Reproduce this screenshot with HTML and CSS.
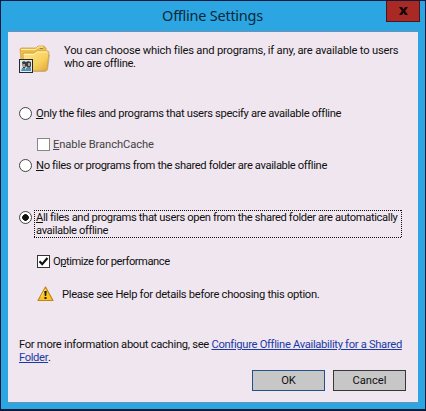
FILE: index.html
```html
<!DOCTYPE html>
<html lang="en">
<head>
<meta charset="utf-8">
<title>Offline Settings</title>
<link rel="stylesheet" href="styles.css">
</head>
<body>
<main class="window">
  <header class="titlebar">
    <h1 class="title">Offline Settings</h1>
    <button class="close" aria-label="Close"><svg width="9" height="8" viewBox="0 0 9 8"><path d="M0 0h3l1.500 2.200L6 0h3L6.200 4 9 8H6L4.500 5.800 3 8H0l2.800-4z" fill="#160808"/></svg></button>
  </header>
  <section class="panel">
    <div class="intro">
      <svg class="folder" width="34" height="32" viewBox="0 0 34 32">
        <defs>
          <linearGradient id="front" x1="0" y1="0" x2="1" y2="1"><stop offset="0" stop-color="#ffe88c"/><stop offset=".6" stop-color="#f7d05e"/><stop offset="1" stop-color="#dca535"/></linearGradient>
        </defs>
        <path d="M6 27l20-1 3-17 2 2-2 15-3 2H7z" fill="#a99a98" opacity=".6"/>
        <path d="M1 5l1-1h15l2-2h6l2 2v4l1 2-2 16H3z" fill="#edbd49" stroke="#d0a04a" stroke-width=".8"/>
        <path d="M2 5.500h15l2-2.500h5" fill="none" stroke="#fff0ac"/>
        <path d="M21 4.500h3" stroke="#8e8751"/>
        <path d="M4 10l1-1h10l3-2h11l1 1-2 18-2 1H5z" fill="url(#front)" stroke="#d3a03d" stroke-width=".8"/>
        <path d="M5 10.500h10l3-2.500h10" fill="none" stroke="#fff4b8"/>
        <rect x=".5" y="15.500" width="13" height="13" fill="#e4eaee" stroke="#252732"/>
        <path d="M3 18l2-1 2 1 2-1 3 1v4l-1 2H9l-2-2-1 2H4z" fill="#3a3f45"/>
        <path d="M4 20h2v3H4zM9 19h2v3H9z" fill="#b89f85"/>
        <path d="M2 27l1-3h3l1 2v1zM7 27v-3l2-1 3 1v3z" fill="#4f93b2"/>
      </svg>
      <p class="text"><span class="l1">You can choose which files and programs, if any, are available to users</span><br><span class="l2">who are offline.</span></p>
    </div>
    <label class="option only"><i class="radio"></i><span class="l3"><u>O</u>nly the files and programs that users specify are available offline</span></label>
    <label class="option branch"><i class="check off"></i><span class="l4"><u>E</u>nable BranchCache</span></label>
    <label class="option none"><i class="radio"></i><span class="l5"><u>N</u>o files or programs from the shared folder are available offline</span></label>
    <label class="option all"><i class="radio on"></i><span class="focus"><span class="l6"><u>A</u>ll files and programs that users open from the shared folder are automatically</span><br><span class="l7">available offline</span>
      <svg class="dots" width="368" height="28"><path d="M0 .5h368M0 27.500h368M.5 0v28M367.500 0v28" fill="none" stroke="#111" stroke-dasharray="1 1"/></svg></span></label>
    <label class="option optimize"><i class="check"><svg width="11" height="11" viewBox="0 0 11 11"><path d="M1.500 5.200l2.700 3L9.500 2" fill="none" stroke="#111" stroke-width="2.200"/></svg></i><span class="l8">O<u>p</u>timize for performance</span></label>
    <div class="option warning">
      <svg width="17" height="16" viewBox="0 0 17 16"><path d="M8.500 1L16 14.500H1z" fill="#fac51c" stroke="#bd8420" stroke-width="1.200" stroke-linejoin="round"/><path d="M8.500 3L4 11" stroke="#ffe478"/><path d="M7.300 5h2.400l-.5 5H7.800zM7.500 11h2v2h-2z" fill="#221b10"/></svg>
      <span class="l9">Please see Help for details before choosing this option.</span>
    </div>
    <p class="text more"><span class="l10">For more information about caching, see </span><a class="l11">Configure Offline Availability for a Shared</a><br><a class="l12">Folder</a>.</p>
    <footer class="actions"><button class="btn ok">OK</button><button class="btn">Cancel</button></footer>
  </section>
</main>
</body>
</html>
```
FILE: styles.css
```css
* { box-sizing: border-box; }
body { margin: 0; }
.window {
  width: 426px; height: 411px; display: flex; flex-direction: column;
  padding: 0 7px 6px; background: #2ba6e3; border: 1px solid #101a3c; border-bottom-width: 2px;
  font: 11.2px/13px Roboto, "Liberation Sans", sans-serif; color: #111;
}
.titlebar { height: 30px; flex: none; display: grid; grid-template-columns: 34px 1fr 34px; margin-right: -2px; }
.title { grid-column: 2; justify-self: center; margin: 4px 3px 0 0; font: 14.5px/20px "Noto Sans", sans-serif; letter-spacing: -.25px; color: #0b2637; white-space: nowrap; }
.close { width: 34px; height: 21px; padding: 0; border: 1px solid #4a1420; border-top: 0; background: #a92925; display: grid; place-items: center; }
.panel { flex: 1; background: #efe6ef; border-top: 1px solid #6d91b0; border-bottom: 1px solid #6d91b0; padding: 0 10px; white-space: nowrap; display: flex; flex-direction: column; }
.text { margin: 0; }
.intro { display: flex; padding-top: 12px; height: 75px; }
.folder { flex: none; margin: 0 11px 0 1px; }
.option { display: flex; align-items: center; height: 13px; flex: none; }
.radio { width: 13px; height: 13px; border: 1px solid #444; border-radius: 50%; background: #fff; margin: 0 4px 0 1px; flex: none; }
.radio.on { background: radial-gradient(circle, #111 0 3px, #fff 3.600px); }
.check { width: 13px; height: 13px; border: 1px solid #333; background: #fff; margin: 0 3px 0 19px; flex: none; display: block; }
.check svg { display: block; }
.check.off { border-color: #888; }
.branch { margin-top: 18px; color: #444; }
.none { margin-top: 8px; }
.all { margin-top: 32px; height: 28px; align-items: flex-start; }
.all .radio { margin-top: 7px; }
.focus { position: relative; display: block; padding-top: 7px; }
.dots { position: absolute; left: -2px; top: 6px; }
.optimize { margin-top: 23px; }
.warning { margin-top: 18px; height: 16px; }
.warning svg { margin: 0 8px 0 19px; }
.more { margin-top: 36px; padding-left: 1px; }
a { color: #1b3aa5; text-decoration: underline; }
.actions { display: flex; justify-content: flex-end; gap: 8px; margin-top: 6px; padding-right: 2px; }
.btn { width: 73px; height: 21px; padding: 0; border: 1px solid #383838; background: #c8c7c8; font: inherit; color: #111; }
.btn.ok { border-color: #24518a; }

/* Tracking per line */
.l1 { letter-spacing: -.2px; }
.l2 { letter-spacing: -.32px; }
.l3 { letter-spacing: -.32px; }
.l4 { letter-spacing: -.09px; }
.l5 { letter-spacing: -.37px; }
.l7 { letter-spacing: -.37px; }
.l6 { letter-spacing: -.37px; }
.l8 { letter-spacing: -.47px; }
.l9 { letter-spacing: -.3px; }
.l11 { letter-spacing: -.31px; }
.l10 { letter-spacing: -.29px; }
.l12 { letter-spacing: -.35px; }
```
